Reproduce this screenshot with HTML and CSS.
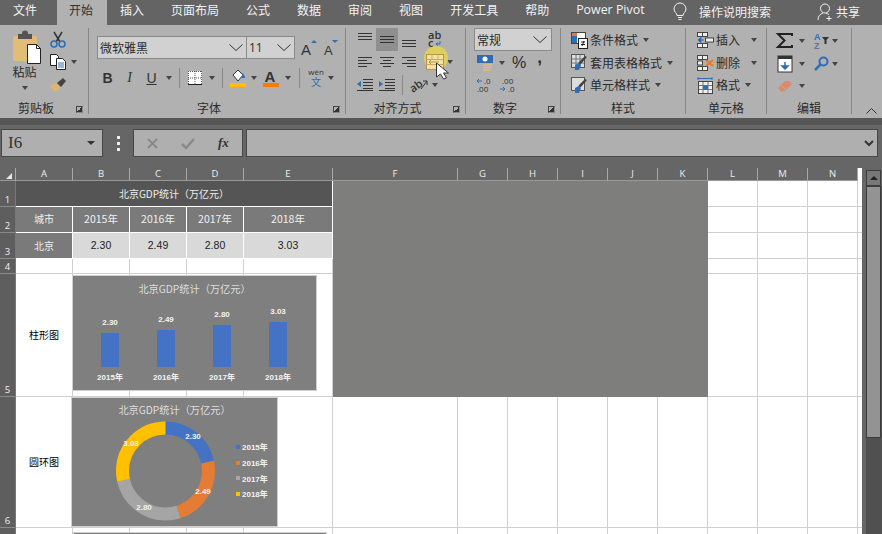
FILE: index.html
```html
<!DOCTYPE html>
<html lang="zh-CN">
<head>
  <meta charset="UTF-8">
  <meta name="viewport" content="width=device-width, initial-scale=1.0">
  <link rel="stylesheet" href="styles.css">
  <title>北京GDP统计</title>
</head>
<body>

  <!-- tabs -->
  <nav class="tabs">
    <a class="tab tab-first">文件</a>
    <a class="tab tab-active">开始</a>
    <a class="tab">插入</a>
    <a class="tab">页面布局</a>
    <a class="tab">公式</a>
    <a class="tab">数据</a>
    <a class="tab">审阅</a>
    <a class="tab">视图</a>
    <a class="tab">开发工具</a>
    <a class="tab">帮助</a>
    <a class="tab">Power Pivot</a>
    <span class="tell-me">
      <svg width="14" height="18" viewBox="0 0 14 18" fill="none" stroke="#f2f2f2"><path d="M4 12.5C4 10 1 9 1 6a6 6 0 0 1 12 0c0 3-3 4-3 6.500z"/><path d="M5 14.500h4M5.500 16.500h3"/></svg>
      操作说明搜索
    </span>
    <span class="share">
      <svg width="16" height="18" viewBox="0 0 16 18" fill="none" stroke="#f2f2f2"><circle cx="8" cy="5.500" r="4.500"/><path d="M1 17c0-4 2-6 5-7M9 10.500c1 0 2 .3 3 1M12 13v5M9.500 15.500h5"/></svg>
      共享
    </span>
  </nav>

  <!-- ribbon -->
  <div class="ribbon">

    <section class="group group-clip">
      <div class="clip-body">
        <div class="paste">
          <svg class="paste-icon" width="30" height="34" viewBox="0 0 30 34"><rect x="1" y="6" width="24" height="25" rx="2" fill="#e2bd77"/><rect x="6" y="4" width="14" height="5" fill="#555"/><circle cx="13" cy="3.500" r="3" fill="#555"/><path d="M15.500 14.500h9l4 4v15h-13z" fill="#fff" stroke="#222"/><path d="M24.500 14.500v4h4" fill="none" stroke="#222"/></svg>
          <span class="paste-label">粘贴</span>
          <i class="caret"></i>
        </div>
        <div class="clip-tools">
          <svg class="clip-tool" width="16" height="17" viewBox="0 0 16 17" fill="none"><path d="M4 1l6 10M12 1L6 11" stroke="#333" stroke-width="1.500"/><circle cx="4" cy="13" r="3" stroke="#2f6db5" stroke-width="1.500"/><circle cx="12" cy="13" r="3" stroke="#2f6db5" stroke-width="1.500"/></svg>
          <span></span>
          <svg class="clip-tool" width="16" height="16" viewBox="0 0 16 16"><path d="M.5.500h6l2 2v9h-8z" fill="#fff" stroke="#222"/><path d="M6.500 4.500h6l3 3v8h-9z" fill="#fff" stroke="#222"/><path d="M8 9h6M8 11h6M8 13h6" stroke="#2f6db5"/></svg>
          <i class="caret"></i>
          <svg class="clip-tool" width="18" height="15" viewBox="0 0 18 15"><path d="M1 9l6-3 4 4-3 5c-3-1-5-3-7-6z" fill="#e0b56c"/><path d="M8 6l6-5 3 3-5 6z" fill="#444"/></svg>
        </div>
      </div>
      <div class="group-foot"><span class="group-label">剪贴板</span><i class="launcher"></i></div>
    </section>

    <section class="group group-font">
      <div class="font-top">
        <div class="combo combo-font"><span>微软雅黑</span><svg width="14" height="7" viewBox="0 0 14 7" fill="none" stroke="#333"><path d="M.5.500l6.500 6 6.500-6"/></svg></div>
        <div class="combo combo-size"><span>11</span><svg width="14" height="7" viewBox="0 0 14 7" fill="none" stroke="#333"><path d="M.5.500l6.500 6 6.500-6"/></svg></div>
        <svg class="grow" width="16" height="16" viewBox="0 0 16 16"><text x="0" y="15" class="svg-a">A</text><path d="M10 3l3-3 3 3z" fill="#2f6db5"/></svg>
        <svg class="shrink" width="14" height="16" viewBox="0 0 14 16"><text x="0" y="15" class="svg-a svg-a-small">A</text><path d="M8 0h6l-3 3z" fill="#2f6db5"/></svg>
      </div>
      <div class="font-row">
        <b class="fmt fmt-b">B</b>
        <i class="fmt fmt-i">I</i>
        <u class="fmt fmt-u">U</u>
        <i class="caret"></i>
        <i class="sep"></i>
        <svg width="14" height="14" viewBox="0 0 14 14"><rect width="14" height="14" fill="#fff"/><path d="M.5 0v13.500M7 0v13M13.500 0v13.500M0 .5h14M0 7h14" stroke="#555" stroke-dasharray="1 1"/><path d="M0 13.500h14" stroke="#222"/></svg>
        <i class="caret"></i>
        <i class="sep"></i>
        <svg width="16" height="18" viewBox="0 0 16 18"><path d="M3 6l5-5 5 5-5 6z" fill="#fff" stroke="#333"/><path d="M12 4c2 1 3 3 3 5h-3z" fill="#2f6db5"/><rect y="14" width="16" height="4" fill="#ffc000"/></svg>
        <i class="caret"></i>
        <svg width="16" height="18" viewBox="0 0 16 18"><text x="1.500" y="13" class="svg-a svg-a-font">A</text><rect y="14" width="16" height="4" fill="#f57c00"/></svg>
        <i class="caret"></i>
        <i class="sep"></i>
        <svg width="16" height="20" viewBox="0 0 16 20"><text x="8" y="7" class="svg-wen">wén</text><text x="8" y="18" class="svg-wen svg-wen-cn">文</text></svg>
        <i class="caret"></i>
      </div>
      <div class="group-foot"><span class="group-label">字体</span><i class="launcher"></i></div>
    </section>

    <section class="group group-align">
      <div class="align-grid">
        <span class="a-cell"><svg width="14" height="16" viewBox="0 0 14 16" stroke="#333"><path d="M0 1.500h14M0 4.500h14M0 7.500h14" /></svg></span>
        <span class="a-cell a-cell-on"><svg width="14" height="9" viewBox="0 0 14 9" stroke="#333"><path d="M0 1.500h14M0 4.500h14M0 7.500h14"/></svg></span>
        <span class="a-cell"><svg width="14" height="16" viewBox="0 0 14 16" stroke="#333"><path d="M0 8.500h14M0 11.500h14M0 14.500h14"/></svg></span>
        <span class="a-cell"><svg width="16" height="20" viewBox="0 0 16 20"><text x="3" y="9" class="svg-ab">ab</text><text x="3" y="16.500" class="svg-ab">c</text><path d="M15 11v3h-4M13 12.500L11 14l2 1.500" fill="none" stroke="#2f6db5"/></svg></span>
        <span></span>

        <span class="a-cell"><svg width="14" height="11" viewBox="0 0 14 11" stroke="#333"><path d="M0 .5h14M0 3.500h9M0 6.500h14M0 9.500h9"/></svg></span>
        <span class="a-cell"><svg width="14" height="11" viewBox="0 0 14 11" stroke="#333"><path d="M0 .5h14M3 3.500h8M0 6.500h14M3 9.500h8"/></svg></span>
        <span class="a-cell"><svg width="14" height="11" viewBox="0 0 14 11" stroke="#333"><path d="M0 .5h14M5 3.500h9M0 6.500h14M5 9.500h9"/></svg></span>
        <span class="a-cell a-cell-merge"><svg class="merge" width="32" height="22" viewBox="0 0 32 22"><circle cx="16" cy="7" r="12" fill="#dfce5d"/><rect x="6.500" y="3.500" width="17" height="15" fill="#f3e3a0" stroke="#b8924c"/><path d="M6.500 8.500h17M6.500 13.500h17M12 3.500v5M18 3.500v5M18 13.500v5" stroke="#c9a764"/><path d="M9 11h10M9 11l2-2M9 11l2 2" stroke="#b8924c" fill="none"/><path d="M16.500 12l12 10h-5l3 5-3 1-3-5-4 3z" fill="#fff" stroke="#333"/></svg></span>
        <i class="caret"></i>

        <span class="a-cell"><svg width="16" height="12" viewBox="0 0 16 12"><path d="M6 .5h10M6 3.500h10M6 6.500h10M6 9.500h10M0 11.500h16" stroke="#333"/><path d="M0 5l4-3v6z" fill="#2f6db5"/></svg></span>
        <span class="a-cell"><svg width="16" height="12" viewBox="0 0 16 12"><path d="M6 .5h10M6 3.500h10M6 6.500h10M6 9.500h10M0 11.500h16" stroke="#333"/><path d="M4 5L0 2v6z" fill="#2f6db5"/></svg></span>
        <span class="align-rest">
          <i class="sep"></i>
          <svg width="18" height="16" viewBox="0 0 18 16"><g transform="rotate(-35 6 10)"><text x="0" y="13" class="svg-ab">ab</text></g><path d="M11 12l6-8M13 4h4v4" fill="none" stroke="#333"/></svg>
          <i class="caret caret-orient"></i>
        </span>
      </div>
      <div class="group-foot"><span class="group-label">对齐方式</span><i class="launcher"></i></div>
    </section>

    <section class="group group-number">
      <div class="combo combo-number"><span>常规</span><svg width="14" height="7" viewBox="0 0 14 7" fill="none" stroke="#333"><path d="M.5.500l6.500 6 6.500-6"/></svg></div>
      <div class="number-row">
        <svg width="17" height="16" viewBox="0 0 17 16"><rect width="16" height="8" fill="#2f6db5"/><circle cx="8" cy="4" r="2.500" fill="#fff"/><path d="M6 10h9M6 12.500h9M6 15h8" stroke="#e2bd77" stroke-width="1.500"/></svg>
        <i class="caret"></i>
        <span class="percent">%</span>
        <span class="comma">,</span>
      </div>
      <div class="number-row number-row-two">
        <svg width="16" height="14" viewBox="0 0 16 14"><path d="M6 3H1M1 3l2-2M1 3l2 2" stroke="#2f6db5" fill="none"/><text x="8" y="6" class="svg-dec">.0</text><text x="1" y="14" class="svg-dec">.00</text></svg>
        <svg width="16" height="14" viewBox="0 0 16 14"><text x="2" y="6" class="svg-dec">.00</text><path d="M0 11h5M5 11l-2-2M5 11l-2 2" stroke="#2f6db5" fill="none"/><text x="8" y="14" class="svg-dec">.0</text></svg>
      </div>
      <div class="group-foot"><span class="group-label">数字</span><i class="launcher"></i></div>
    </section>

    <section class="group group-styles">
      <div class="list-body">
        <div class="list-row"><svg width="17" height="17" viewBox="0 0 17 17"><rect x=".5" y=".5" width="14" height="11" fill="#fff" stroke="#444"/><rect x="1" y="1" width="5" height="3" fill="#e8762b"/><rect x="1" y="4" width="5" height="7" fill="#2f6db5"/><rect x="7.500" y="6.500" width="9" height="10" fill="#fff" stroke="#222"/><path d="M10 10h4M10 12.500h4M13 9l-2 5" stroke="#222" fill="none"/></svg><span>条件格式</span><i class="caret"></i></div>
        <div class="list-row"><svg width="17" height="17" viewBox="0 0 17 17"><rect x=".5" y=".5" width="13" height="13" fill="#ddd" stroke="#555"/><path d="M5 1v12M9 1v12M1 5h12M1 9h12" stroke="#777"/><path d="M16 3l-6 7-3 1 1-3 6-6z" fill="#444"/><path d="M4 11l4-2 2 2-2 5-4 0z" fill="#2f6db5"/></svg><span>套用表格格式</span><i class="caret"></i></div>
        <div class="list-row"><svg width="17" height="17" viewBox="0 0 17 17"><rect x=".5" y=".5" width="13" height="13" fill="#ddd" stroke="#555"/><path d="M16 3l-6 7-3 1 1-3 6-6z" fill="#444"/><path d="M4 11l4-2 2 2-2 5-4 0z" fill="#2f6db5"/></svg><span>单元格样式</span><i class="caret"></i></div>
      </div>
      <div class="group-foot"><span class="group-label">样式</span></div>
    </section>

    <section class="group group-cells">
      <div class="list-body">
        <div class="list-row"><svg width="17" height="16" viewBox="0 0 17 16" fill="#eee" stroke="#444"><rect x=".5" y=".5" width="5" height="4"/><rect x="5.500" y=".5" width="5" height="4"/><rect x=".5" y="11.500" width="5" height="4"/><rect x="5.500" y="11.500" width="5" height="4"/><rect x="8.500" y="6" width="8" height="4"/><path d="M7 8H1M1 8l3-2.500v5z" fill="#2f6db5" stroke="#2f6db5"/></svg><span>插入</span><i class="caret caret-wide"></i></div>
        <div class="list-row"><svg width="17" height="16" viewBox="0 0 17 16" fill="#eee" stroke="#444"><rect x=".5" y=".5" width="5" height="4"/><rect x="5.500" y=".5" width="5" height="4"/><rect x=".5" y="11.500" width="5" height="4"/><rect x="5.500" y="11.500" width="5" height="4"/><rect x=".5" y="6" width="5" height="4"/><path d="M9 5l7 6M16 5l-7 6" stroke="#e8762b" stroke-width="2"/></svg><span>删除</span><i class="caret caret-wide"></i></div>
        <div class="list-row"><svg width="17" height="17" viewBox="0 0 17 17"><path d="M1 1.500h14M1 0v3M15 0v3" stroke="#2f6db5"/><rect x="1.500" y="4.500" width="14" height="12" fill="#eee" stroke="#444"/><path d="M6 5v11M11 5v11M2 8.500h13M2 12.500h13" stroke="#777"/><rect x="6" y="8.500" width="5" height="4" fill="#2f6db5"/></svg><span>格式</span><i class="caret"></i></div>
      </div>
      <div class="group-foot"><span class="group-label">单元格</span></div>
    </section>

    <section class="group group-edit">
      <div class="edit-grid">
        <svg width="16" height="15" viewBox="0 0 16 15"><path d="M15 3V1H1l6.500 6.500L1 14h14v-2" fill="none" stroke="#222" stroke-width="2"/></svg>
        <i class="caret"></i>
        <svg width="15" height="16" viewBox="0 0 15 16"><text x="0" y="7" class="svg-az">A</text><text x="0" y="16" class="svg-az svg-az-z">Z</text><path d="M8 4h7l-2.500 3v4h-2V7z" fill="#333"/></svg>
        <i class="caret"></i>

        <svg width="14" height="16" viewBox="0 0 14 16"><rect width="14" height="16" fill="#fff" stroke="#333"/><rect width="14" height="3" fill="#333"/><path d="M7 6v7M7 13l-3-3h6z" fill="#2f6db5" stroke="#2f6db5" stroke-width="1.500"/></svg>
        <i class="caret"></i>
        <svg width="15" height="15" viewBox="0 0 15 15" fill="none"><circle cx="9.500" cy="5.500" r="4" stroke="#2f6db5" stroke-width="2"/><path d="M6.500 8.500L1 14" stroke="#2f6db5" stroke-width="2.500"/></svg>
        <i class="caret"></i>

        <svg width="14" height="12" viewBox="0 0 14 12"><path d="M0 8l7-7 4 0 3 3-7 7-4 1z" fill="#d98c6b"/><path d="M3 5l6 6" stroke="#b0b0b0"/></svg>
        <i class="caret"></i>
      </div>
      <div class="group-foot"><span class="group-label">编辑</span></div>
    </section>

    <div class="collapse">
      <svg width="11" height="6" viewBox="0 0 11 6" fill="none" stroke="#333"><path d="M.5 5.500l5-5 5 5"/></svg>
    </div>
  </div>

  <!-- formula bar -->
  <div class="formula-bar">
    <div class="name-box"><span>I6</span><i class="caret caret-dark"></i></div>
    <div class="dots"><i></i><i></i><i></i></div>
    <div class="formula-btns">
      <svg width="11" height="11" viewBox="0 0 11 11" stroke="#8a8a8a" stroke-width="2"><path d="M1 1l9 9M10 1l-9 9"/></svg>
      <svg width="14" height="11" viewBox="0 0 14 11" fill="none" stroke="#8a8a8a" stroke-width="2.500"><path d="M1 6l4 4 8-9"/></svg>
      <span class="fx">fx</span>
    </div>
    <div class="formula-input">
      <svg width="10" height="7" viewBox="0 0 10 7" fill="none" stroke="#333" stroke-width="2"><path d="M1 1l4 4 4-4"/></svg>
    </div>
  </div>

  <!-- sheet -->
  <div class="sheet-wrap">
    <div class="sheet">
      <table class="grid">
        <colgroup>
          <col class="c-rh"><col class="c-n"><col class="c-n"><col class="c-n"><col class="c-n"><col class="c-e"><col class="c-f">
          <col class="c-s"><col class="c-s"><col class="c-s"><col class="c-s"><col class="c-s"><col class="c-s"><col class="c-s"><col class="c-s"><col class="c-o">
        </colgroup>
        <tr class="r-head">
          <th class="corner"><i></i></th><th>A</th><th>B</th><th>C</th><th>D</th><th>E</th><th>F</th><th>G</th><th>H</th><th>I</th><th>J</th><th>K</th><th>L</th><th>M</th><th>N</th><th class="no-line"></th>
        </tr>
        <tr class="r-1">
          <th class="rh">1</th>
          <td colspan="5" class="title-cell">北京GDP统计（万亿元）</td>
          <td colspan="6" rowspan="5" class="merged"></td>
          <td></td><td></td><td></td><td class="no-line"></td>
        </tr>
        <tr class="r-2">
          <th class="rh">2</th>
          <td class="mid mid-cn">城市</td><td class="mid">2015年</td><td class="mid">2016年</td><td class="mid">2017年</td><td class="mid">2018年</td>
          <td></td><td></td><td></td><td class="no-line"></td>
        </tr>
        <tr class="r-3">
          <th class="rh">3</th>
          <td class="mid mid-cn">北京</td><td class="val">2.30</td><td class="val">2.49</td><td class="val">2.80</td><td class="val">3.03</td>
          <td></td><td></td><td></td><td class="no-line"></td>
        </tr>
        <tr class="r-4">
          <th class="rh">4</th>
          <td></td><td></td><td></td><td></td><td></td>
          <td></td><td></td><td></td><td class="no-line"></td>
        </tr>
        <tr class="r-5">
          <th class="rh">5</th>
          <td class="label-cell">柱形图</td><td></td><td></td><td></td><td></td>
          <td></td><td></td><td></td><td class="no-line"></td>
        </tr>
        <tr class="r-6">
          <th class="rh">6</th>
          <td class="label-cell">圆环图</td><td></td><td></td><td></td><td></td><td></td><td></td><td></td><td></td><td></td><td></td><td></td><td></td><td></td><td class="no-line"></td>
        </tr>
        <tr class="r-7">
          <th class="rh"></th>
          <td></td><td></td><td></td><td></td><td></td><td></td><td></td><td></td><td></td><td></td><td></td><td></td><td></td><td></td><td class="no-line"></td>
        </tr>
      </table>

      <!-- bar chart -->
      <div class="chart chart-bar">
        <div class="chart-title">北京GDP统计（万亿元）</div>
        <div class="plot">
          <div class="bar-col"><span class="bar-val">2.30</span><div class="bar" style="height:34px"></div><span class="bar-year">2015年</span></div>
          <div class="bar-col"><span class="bar-val">2.49</span><div class="bar" style="height:37px"></div><span class="bar-year">2016年</span></div>
          <div class="bar-col"><span class="bar-val">2.80</span><div class="bar" style="height:42px"></div><span class="bar-year">2017年</span></div>
          <div class="bar-col"><span class="bar-val">3.03</span><div class="bar" style="height:45px"></div><span class="bar-year">2018年</span></div>
        </div>
      </div>

      <!-- doughnut chart -->
      <div class="chart chart-donut">
        <div class="chart-title">北京GDP统计（万亿元）</div>
        <div class="donut-body">
          <svg class="donut" width="110" height="110" viewBox="0 0 110 110">
            <g fill="none" stroke-width="13" transform="rotate(-90 55.500 55)">
              <circle cx="55.500" cy="55" r="43" pathLength="1062" stroke="#4472c4" stroke-dasharray="230 832"/>
              <circle cx="55.500" cy="55" r="43" pathLength="1062" stroke="#e47c33" stroke-dasharray="249 813" stroke-dashoffset="-230"/>
              <circle cx="55.500" cy="55" r="43" pathLength="1062" stroke="#a5a5a5" stroke-dasharray="280 782" stroke-dashoffset="-479"/>
              <circle cx="55.500" cy="55" r="43" pathLength="1062" stroke="#ffc000" stroke-dasharray="303 759" stroke-dashoffset="-759"/>
            </g>
            <text x="83" y="23" class="donut-val">2.30</text>
            <text x="93" y="78" class="donut-val">2.49</text>
            <text x="34" y="94" class="donut-val">2.80</text>
            <text x="21" y="30" class="donut-val">3.03</text>
          </svg>
          <ul class="legend">
            <li><i class="sw sw-blue"></i>2015年</li>
            <li><i class="sw sw-orange"></i>2016年</li>
            <li><i class="sw sw-gray"></i>2017年</li>
            <li><i class="sw sw-yellow"></i>2018年</li>
          </ul>
        </div>
      </div>

      <!-- third chart, cut off by the window -->
      <div class="chart chart-next"></div>
    </div>

    <div class="scrollbar">
      <div class="scroll-up"><i></i></div>
      <div class="scroll-track"><div class="scroll-thumb"></div></div>
    </div>
  </div>

</body>
</html>
```

FILE: styles.css
```css
* {
  box-sizing: border-box;
}

html, body {
  margin: 0;
  padding: 0;
  width: 882px;
  height: 534px;
  overflow: hidden;
}

body {
  font-family: "Noto Sans CJK SC", "Liberation Sans", sans-serif;
  font-size: 12px;
  background: #666;
  color: #2b2b2b;
}

svg {
  display: block;
  overflow: visible;
}

/* tabs */
.tabs {
  display: flex;
  align-items: stretch;
  height: 25px;
  background: #646464;
  color: #f2f2f2;
  line-height: 16px;
}

.tab {
  padding: 2px 13.500px 0;
  white-space: nowrap;
}

.tab-first {
  padding-left: 13px;
  margin-right: 6.500px;
}

.tab-active {
  padding-left: 12px;
  background: #b1b1b1;
  color: #303030;
}

.tab:last-of-type {
  font-family: "Open Sans", sans-serif;
  font-size: 12.400px;
}

.tell-me {
  display: flex;
  align-items: center;
  gap: 12px;
  margin-left: 15px;
  height: 25px;
  padding-bottom: 1px;
}

.share {
  display: flex;
  align-items: center;
  gap: 3px;
  margin-left: 46px;
  height: 25px;
  padding-bottom: 1px;
}

/* ribbon */
.ribbon {
  display: flex;
  height: 93px;
  padding-top: 3px;
  background: #b1b1b1;
}

.group {
  display: flex;
  flex-direction: column;
  height: 86px;
  border-right: 1px solid #868686;
}

.group-clip { width: 89px; }
.group-font { width: 257px; padding-left: 8px; }
.group-align { width: 120px; padding-left: 8px; }
.group-number { width: 95px; padding-left: 8px; }
.group-styles { width: 125px; padding-left: 10px; }
.group-cells { width: 81px; padding-left: 11px; }
.group-edit { width: 85px; padding-left: 8px; }

.group-foot {
  display: flex;
  align-items: center;
  margin-top: auto;
  height: 12px;
  line-height: 12px;
}

.group-font .group-foot,
.group-align .group-foot,
.group-number .group-foot {
  margin-left: -8px;
}

.group-styles .group-foot { margin-left: -10px; }
.group-cells .group-foot { margin-left: -11px; }
.group-edit .group-foot { margin-left: -8px; }

.group-label {
  flex: 1;
  text-align: center;
}

.launcher {
  position: relative;
  width: 7px;
  height: 7px;
  margin: 3px 5px 0 4px;
  border-left: 1px solid #444;
  border-top: 1px solid #444;
  border-right: 1px solid #888;
  border-bottom: 1px solid #888;
  background: linear-gradient(135deg, transparent 50%, #333 50%);
}

.caret {
  display: block;
  width: 0;
  height: 0;
  border-left: 3.500px solid transparent;
  border-right: 3.500px solid transparent;
  border-top: 4px solid #444;
}

.sep {
  display: block;
  width: 1px;
  height: 20px;
  background: #888;
}

/* clipboard */
.clip-body {
  display: flex;
}

.paste {
  display: flex;
  flex-direction: column;
  align-items: center;
  width: 44px;
  padding: 2px 0 0 0;
  margin-left: 3px;
}

.paste-icon {
  margin-left: 4px;
}

.paste-label {
  line-height: 16px;
  margin-left: -1px;
}

.paste .caret {
  margin-top: 6px;
}

.clip-tools {
  display: grid;
  grid-template-columns: 21px 12px;
  grid-template-rows: 22px 23px 22px;
  align-items: center;
  justify-items: center;
}

/* font */
.font-top {
  display: flex;
  align-items: flex-start;
  margin-top: 8px;
}

.combo {
  display: flex;
  align-items: center;
  justify-content: space-between;
  height: 23px;
  padding: 0 3px 0 2px;
  background: #d1d1d1;
  border: 1px solid #8a8a8a;
  line-height: 16px;
}

.combo-font { width: 149px; border-right: 0; }
.combo-size { width: 49px; margin-right: 6px; }
.combo-size span { font-family: "Open Sans", sans-serif; font-size: 12px; }

.grow { margin-top: 4px; margin-right: 7px; }
.shrink { margin-top: 4px; }

.svg-a {
  font-family: "Liberation Sans", sans-serif;
  font-size: 15px;
  fill: #333;
}

.svg-a-small { font-size: 13px; }
.svg-a-font { font-size: 15px; font-weight: bold; }

.font-row {
  display: grid;
  grid-template-columns: 21px 23px 21px 13px 8px 23px 11px 10px 22px 10px 24px 10px 12px 21px 10px;
  align-items: center;
  justify-items: center;
  height: 22px;
  margin-top: 8px;
}

.fmt {
  font-family: "Liberation Sans", sans-serif;
  font-size: 14px;
  line-height: 16px;
  color: #333;
}

.fmt-b { font-weight: bold; }
.fmt-i { font-family: "Liberation Serif", serif; }

.svg-wen {
  font-family: "Open Sans", sans-serif;
  font-size: 8px;
  text-anchor: middle;
  fill: #333;
}

.svg-wen-cn {
  font-family: "Noto Sans CJK SC", sans-serif;
  font-size: 10px;
  fill: #2f6db5;
}

/* alignment */
.align-grid {
  display: grid;
  grid-template-columns: 22px 22px 22px 26px 8px;
  grid-template-rows: 23px 22px 23px;
  align-items: center;
  justify-items: center;
}

.a-cell {
  display: flex;
  align-items: center;
  justify-content: center;
  width: 22px;
  height: 23px;
}

.a-cell-on {
  background: #8f8f8f;
}

.a-cell-merge {
  margin-left: 6px;
}

.merge {
  position: relative;
  z-index: 1;
}

.align-rest {
  grid-column: span 3;
  justify-self: start;
  display: flex;
  align-items: center;
  gap: 7px;
  padding-left: 4px;
}

.caret-orient {
  margin-left: -3px;
}

.svg-ab {
  font-family: "Open Sans", sans-serif;
  font-size: 11px;
  font-weight: 600;
  fill: #333;
}

/* number */
.combo-number {
  width: 78px;
  padding-right: 4px;
}

.number-row {
  display: flex;
  align-items: center;
  height: 18px;
  margin-top: 3px;
  padding-left: 3px;
}

.number-row .caret {
  margin-left: 5px;
}

.percent {
  margin-left: 7px;
  font-family: "Liberation Sans", sans-serif;
  font-size: 16px;
}

.comma {
  margin-left: 11px;
  margin-top: -10px;
  font-family: "Liberation Sans", sans-serif;
  font-size: 17px;
  font-weight: bold;
}

.number-row-two {
  gap: 8px;
  margin-top: 4px;
  padding-left: 2px;
}

.svg-dec {
  font-family: "Open Sans", sans-serif;
  font-size: 8px;
  fill: #333;
}

/* styles and cells lists */
.list-row {
  display: flex;
  align-items: center;
  gap: 2px;
  height: 22.500px;
  white-space: nowrap;
  line-height: 16px;
}

.list-body {
  margin-top: 1px;
}

.list-row .caret {
  margin-left: 3px;
}

.list-row .caret-wide {
  margin-left: 9px;
}

/* editing */
.edit-grid {
  display: grid;
  grid-template-columns: 20px 14px 2px 20px 8px;
  grid-template-rows: 23px 23px 22px;
  align-items: center;
  justify-items: center;
  margin-top: 1px;
}

.edit-grid svg:nth-of-type(even) {
  grid-column: 4;
}

.svg-az {
  font-family: "Liberation Sans", sans-serif;
  font-size: 9px;
  font-weight: bold;
  fill: #2f6db5;
}

.svg-az-z {
  fill: #6d6da0;
}

.collapse {
  display: flex;
  align-items: flex-end;
  padding: 0 0 4px 14px;
}

/* formula bar */
.formula-bar {
  display: flex;
  height: 50px;
  padding: 4px 4px 0 1px;
  border-top: 7px solid #565656;
  background: #666;
}

.name-box {
  display: flex;
  align-items: center;
  justify-content: space-between;
  width: 102px;
  height: 28px;
  padding: 0 7px 0 6px;
  background: #afafaf;
  border: 1px solid #474747;
  font-family: "Liberation Serif", serif;
  font-size: 17px;
  color: #333;
}

.caret-dark {
  border-top-color: #333;
  border-left-width: 4px;
  border-right-width: 4px;
}

.dots {
  display: flex;
  flex-direction: column;
  justify-content: center;
  gap: 3px;
  width: 30px;
  height: 28px;
  padding-left: 14px;
}

.dots i {
  display: block;
  width: 3px;
  height: 3px;
  background: #eee;
}

.formula-btns {
  display: flex;
  align-items: center;
  width: 110px;
  height: 28px;
  padding-left: 13px;
  gap: 23px;
  background: #afafaf;
  border: 1px solid #474747;
}

.fx {
  font-family: "Liberation Serif", serif;
  font-size: 13px;
  font-style: italic;
  font-weight: bold;
  color: #333;
}

.formula-input {
  display: flex;
  align-items: center;
  justify-content: flex-end;
  flex: 1;
  height: 28px;
  margin-left: 3px;
  padding-right: 3px;
  background: #afafaf;
  border: 1px solid #474747;
}

/* sheet */
.sheet-wrap {
  display: flex;
  height: 366px;
}

.sheet {
  position: relative;
  width: 862px;
  height: 366px;
  overflow: hidden;
}

.grid {
  width: 862px;
  border-collapse: separate;
  border-spacing: 0;
  table-layout: fixed;
  background: #fff;
  font-size: 10px;
}

.c-rh { width: 16px; }
.c-n { width: 57px; }
.c-e { width: 89px; }
.c-f { width: 125px; }
.c-s { width: 50px; }
.c-o { width: 5px; }

.grid th,
.grid td {
  padding: 0;
  border-right: 1px solid #d0d0d0;
  border-bottom: 1px solid #d0d0d0;
  text-align: center;
  line-height: 12px;
  overflow: hidden;
}

.grid td.no-line {
  border-right: 0;
}

.r-head { height: 13px; }
.r-1 { height: 26px; }
.r-2 { height: 26px; }
.r-3 { height: 26px; }
.r-4 { height: 15px; }
.r-5 { height: 123px; }
.r-6 { height: 131px; }
.r-7 { height: 40px; }

.r-head th {
  background: #666;
  color: #eee;
  font-family: "Open Sans", sans-serif;
  font-size: 9.500px;
  font-weight: 400;
  border-right: 1px solid #a8a8a8;
  border-bottom: 1px solid #999;
}

.r-head th.no-line {
  background: #fff;
  border-right: 0;
  border-bottom: 0;
}

.corner i {
  display: block;
  width: 0;
  height: 0;
  margin: 3px 0 0 6px;
  border-left: 6px solid transparent;
  border-bottom: 6px solid #e8e8e8;
}

.grid th.rh {
  background: #5e5e5e;
  color: #f0f0f0;
  font-family: "Open Sans", sans-serif;
  font-size: 9.500px;
  font-weight: 400;
  vertical-align: bottom;
  border-right: 1px solid #777;
  border-bottom: 1px solid #8a8a8a;
}

.grid .title-cell {
  background: #555;
  color: #eee;
  border-color: #fff;
}

.grid .merged {
  background: #7e7e7c;
  border-color: #7e7e7c;
}

.grid .mid {
  padding-bottom: 2px;
  background: #7a7a7a;
  color: #f0f0f0;
  border-color: #fff;
  font-size: 10.500px;
}

.grid .mid-cn {
  font-size: 10px;
}

.r-3 .mid {
  padding-bottom: 0;
}

.grid .val {
  padding-bottom: 2px;
  background: #d9d9d9;
  color: #222;
  border-color: #fff;
  font-size: 10.500px;
  font-family: "Liberation Sans", sans-serif;
}

.label-cell {
  color: #000;
}

/* charts sit on top of the grid */
.chart {
  position: absolute;
  background: #7f7f7f;
  border: 1px solid #d0d0d0;
  color: #e6e6e6;
  font-size: 10.200px;
}

.chart-title {
  height: 20px;
  padding-top: 5px;
  line-height: 15px;
  text-align: center;
  color: #dedede;
}

.chart-bar {
  left: 72px;
  top: 107px;
  width: 245px;
  height: 116px;
}

.plot {
  display: flex;
  align-items: flex-end;
  height: 88px;
  padding-left: 9px;
}

.bar-col {
  display: flex;
  flex-direction: column;
  align-items: center;
  width: 56px;
}

.bar {
  width: 18px;
  background: #4472c4;
}

.bar-val,
.bar-year {
  font-family: "Liberation Sans", "Noto Sans CJK SC", sans-serif;
  font-size: 8px;
  font-weight: bold;
  line-height: 12px;
  color: #f2f2f2;
}

.bar-val {
  margin-bottom: 4px;
}

.bar-year {
  margin-top: 5px;
}

.chart-donut {
  left: 71px;
  top: 229px;
  width: 207px;
  height: 130px;
}

.chart-donut .chart-title {
  padding-top: 4px;
}

.donut-body {
  display: flex;
  padding-left: 38px;
  margin-top: -2px;
}

.donut-val {
  font-family: "Liberation Sans", sans-serif;
  font-size: 8px;
  font-weight: bold;
  fill: #f2f2f2;
  text-anchor: middle;
}

.legend {
  list-style: none;
  margin: 23px 0 0 16px;
  padding: 0;
  font-family: "Liberation Sans", "Noto Sans CJK SC", sans-serif;
  font-size: 8px;
  font-weight: bold;
  color: #f2f2f2;
}

.legend li {
  display: flex;
  align-items: center;
  gap: 2px;
  height: 15.700px;
  white-space: nowrap;
}

.sw {
  display: block;
  width: 4px;
  height: 4px;
}

.sw-blue { background: #4472c4; }
.sw-orange { background: #e47c33; }
.sw-gray { background: #a5a5a5; }
.sw-yellow { background: #ffc000; }

.chart-next {
  left: 73px;
  top: 364px;
  width: 254px;
  height: 40px;
}

/* scrollbar */
.scrollbar {
  width: 20px;
  padding-left: 4px;
  background: #666;
}

.scroll-up {
  display: flex;
  align-items: center;
  justify-content: center;
  width: 15px;
  height: 16px;
  margin-top: 2px;
  background: #777;
  border: 1px solid #3c3c3c;
}

.scroll-up i {
  display: block;
  width: 0;
  height: 0;
  border-left: 4px solid transparent;
  border-right: 4px solid transparent;
  border-bottom: 4px solid #222;
}

.scroll-track {
  height: 348px;
  background: #505050;
}

.scroll-thumb {
  width: 15px;
  height: 252px;
  background: #939393;
  border: 1px solid #3c3c3c;
}
```
